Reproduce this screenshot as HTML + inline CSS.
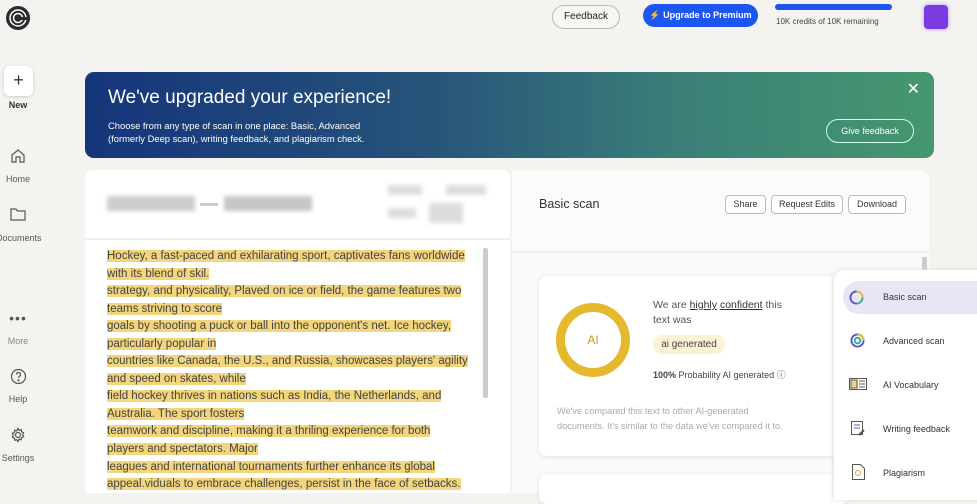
<!DOCTYPE html>
<html><head><style>
*{box-sizing:border-box;margin:0;padding:0}
body{width:977px;height:493px;overflow:hidden;background:#f4f3f0;font-family:"Liberation Sans",sans-serif;position:relative;color:#222}
.a{position:absolute}
.sl{position:absolute;width:36px;text-align:center;font-size:9px;color:#555}
.hl{background:#f2d57c;line-height:17.5px}
.btn{position:absolute;border:1px solid #bbb;border-radius:4px;font-size:9px;height:19px;line-height:17px;text-align:center;background:#fff;color:#333}
.mi{position:absolute;left:883px;font-size:9px;color:#333}
</style></head><body>
<svg class="a" style="left:5px;top:5px" width="26" height="26" viewBox="0 0 26 26"><circle cx="13" cy="13" r="12" fill="#2b2b2b"/><circle cx="13" cy="13" r="8" fill="none" stroke="#fff" stroke-width="1.5"/><circle cx="13" cy="13" r="4.5" fill="none" stroke="#fff" stroke-width="1.5"/><rect x="13" y="12" width="12" height="3" fill="#2b2b2b"/></svg>
<div class="a" style="left:552px;top:5px;width:68px;height:24px;border:1px solid #bbb;border-radius:12px;font-size:10px;text-align:center;line-height:22px;background:#f7f6f3">Feedback</div>
<div class="a" style="left:643px;top:4px;width:115px;height:23px;border-radius:12px;background:#1d56ee;color:#fff;font-size:9px;text-align:center;line-height:23px;font-weight:bold">⚡ Upgrade to Premium</div>
<div class="a" style="left:775px;top:4px;width:117px;height:6px;border-radius:3px;background:#1d56ee"></div>
<div class="a" style="left:776px;top:17px;font-size:8px;color:#444">10K credits of 10K remaining</div>
<div class="a" style="left:924px;top:5px;width:24px;height:24px;background:#7a3be0;border-radius:4px;box-shadow:0 0 4px #b39af0"></div>
<div class="a" style="left:4px;top:66px;width:29px;height:30px;background:#fff;border-radius:5px;box-shadow:0 1px 3px #ccc;text-align:center;font-size:18px;line-height:28px;color:#333">+</div>
<div class="sl" style="left:0;top:100px;font-weight:bold;color:#333">New</div>
<svg class="a" style="left:10px;top:148px" width="16" height="16" viewBox="0 0 16 16" fill="none" stroke="#555" stroke-width="1.2"><path d="M2 7L8 2l6 5v7H10V9H6v5H2z"/></svg>
<div class="sl" style="left:0;top:174px">Home</div>
<svg class="a" style="left:10px;top:207px" width="16" height="14" viewBox="0 0 16 14" fill="none" stroke="#555" stroke-width="1.2"><path d="M1 2h5l1.5 2H15v9H1z"/></svg>
<div class="sl" style="left:-4px;top:233px;width:44px">Documents</div>
<div class="sl" style="left:0;top:310px;font-size:14px;letter-spacing:1px;color:#555">•••</div>
<div class="sl" style="left:0;top:336px;color:#888">More</div>
<svg class="a" style="left:10px;top:368px" width="17" height="17" viewBox="0 0 17 17" fill="none" stroke="#555" stroke-width="1.2"><circle cx="8.5" cy="8.5" r="7"/><path d="M6.5 6.5a2 2 0 1 1 3 1.7c-.7.4-1 .8-1 1.6"/><circle cx="8.5" cy="12.3" r=".5" fill="#555"/></svg>
<div class="sl" style="left:0;top:394px">Help</div>
<svg class="a" style="left:10px;top:427px" width="16" height="16" viewBox="0 0 16 16" fill="none" stroke="#555" stroke-width="1.2"><circle cx="8" cy="8" r="2.5"/><path d="M8 1.5l1.2 1.8 2-.6.4 2.1 2 .9-.9 2 .9 2-2 .9-.4 2.1-2-.6L8 14.5l-1.2-1.8-2 .6-.4-2.1-2-.9.9-2-.9-2 2-.9.4-2.1 2 .6z"/></svg>
<div class="sl" style="left:0;top:453px">Settings</div>
<div class="a" style="left:85px;top:72px;width:849px;height:86px;border-radius:9px;background:linear-gradient(90deg,#15357a 0%,#26537a 40%,#3a7f78 70%,#46976f 100%)">
<div class="a" style="left:23px;top:15px;font-size:19px;color:#fff">We've upgraded your experience!</div>
<div class="a" style="left:23px;top:48px;font-size:9.4px;color:#fff;line-height:12.5px">Choose from any type of scan in one place: Basic, Advanced<br>(formerly Deep scan), writing feedback, and plagiarism check.</div>
<div class="a" style="right:20px;top:47px;width:88px;height:24px;border:1px solid #cfe;border-radius:12px;color:#fff;font-size:9px;text-align:center;line-height:22px">Give feedback</div>
<div class="a" style="right:14px;top:7px;color:#fff;font-size:16px">✕</div>
</div>
<div class="a" style="left:85px;top:170px;width:425px;height:323px;background:#fff;border-radius:8px 8px 0 0"></div>
<div class="a" style="left:85px;top:238px;width:425px;height:2px;background:#f0f0f0"></div>
<div class="a" style="left:107px;top:196px;width:88px;height:15px;background:#ccc;filter:blur(2px)"></div>
<div class="a" style="left:200px;top:203px;width:18px;height:3px;background:#ccc"></div>
<div class="a" style="left:224px;top:196px;width:88px;height:15px;background:#c6c6c6;filter:blur(2px)"></div>
<div class="a" style="left:388px;top:185px;width:34px;height:10px;background:#ddd;filter:blur(2px)"></div>
<div class="a" style="left:446px;top:185px;width:40px;height:10px;background:#ddd;filter:blur(2px)"></div>
<div class="a" style="left:388px;top:208px;width:28px;height:10px;background:#ddd;filter:blur(2px)"></div>
<div class="a" style="left:429px;top:203px;width:34px;height:20px;background:#ddd;filter:blur(2px)"></div>
<div class="a" style="left:483px;top:248px;width:5px;height:150px;background:#ccc;border-radius:2px"></div>
<div class="a" style="left:107px;top:248px;width:375px;font-size:11.5px;color:#444;line-height:17.55px;white-space:nowrap">
<span class="hl">Hockey, a fast-paced and exhilarating sport, captivates fans worldwide </span><br><span class="hl">with its blend of skil.</span><br><span class="hl">strategy, and physicality, Plaved on ice or field, the game features two </span><br><span class="hl">teams striving to score</span><br><span class="hl">goals by shooting a puck or ball into the opponent's net. Ice hockey, </span><br><span class="hl">particularly popular in</span><br><span class="hl">countries like Canada, the U.S., and Russia, showcases players' agility </span><br><span class="hl">and speed on skates, while</span><br><span class="hl">field hockey thrives in nations such as India, the Netherlands, and </span><br><span class="hl">Australia. The sport fosters</span><br><span class="hl">teamwork and discipline, making it a thriling experience for both </span><br><span class="hl">players and spectators. Major</span><br><span class="hl">leagues and international tournaments further enhance its global </span><br><span class="hl">appeal.viduals to embrace challenges, persist in the face of setbacks.</span>
</div>
<div class="a" style="left:512px;top:170px;width:417px;height:82px;background:#fcfbfa;border-radius:0 8px 0 0;border-bottom:1px solid #eee"></div>
<div class="a" style="left:512px;top:253px;width:417px;height:240px;background:#fafaf9"></div>
<div class="a" style="left:539px;top:197px;font-size:12.5px;color:#333">Basic scan</div>
<div class="btn" style="left:725px;top:195px;width:41px">Share</div>
<div class="btn" style="left:771px;top:195px;width:72px">Request Edits</div>
<div class="btn" style="left:848px;top:195px;width:58px">Download</div>
<div class="a" style="left:922px;top:257px;width:5px;height:14px;background:#ccc"></div>
<div class="a" style="left:539px;top:276px;width:310px;height:180px;background:#fff;border-radius:8px;box-shadow:0 1px 4px #e2e2e2"></div>
<div class="a" style="left:539px;top:474px;width:310px;height:30px;background:#fff;border-radius:8px;box-shadow:0 1px 4px #e2e2e2"></div>
<div class="a" style="left:556px;top:303px;width:74px;height:74px;border-radius:50%;border:9px solid #e5b92e;text-align:center;line-height:56px;font-size:12px;color:#c49a20">AI</div>
<div class="a" style="left:653px;top:298px;font-size:10.5px;color:#555;line-height:15px">We are <u style="color:#333">highly</u> <u style="color:#333">confident</u> this<br>text was</div>
<div class="a" style="left:653px;top:335px;width:72px;height:19px;border-radius:9px;background:#fcf2d5;font-size:10px;text-align:center;line-height:19px;color:#444">ai generated</div>
<div class="a" style="left:653px;top:368px;font-size:9px;color:#444"><b>100%</b> Probability AI generated ⓘ</div>
<div class="a" style="left:557px;top:404px;font-size:9.2px;color:#aaa;line-height:15px">We've compared this text to other AI-generated<br>documents. It's similar to the data we've compared it to.</div>
<div class="a" style="left:834px;top:270px;width:150px;height:230px;background:#fff;border-radius:10px 0 0 0;box-shadow:-1px 0 5px #ddd"></div>
<div class="a" style="left:843px;top:281px;width:140px;height:33px;background:#e8e6f5;border-radius:16px 0 0 16px"></div>
<svg class="a" style="left:849px;top:290px" width="15" height="15" viewBox="0 0 16 16" fill="none" stroke-width="2"><path d="M8 1.5a6.5 6.5 0 0 1 6.5 6.5" stroke="#e5b92e"/><path d="M14.5 8A6.5 6.5 0 0 1 8 14.5" stroke="#3a9"/><path d="M8 14.5A6.5 6.5 0 0 1 8 1.5" stroke="#55c"/></svg>
<div class="mi" style="top:292px">Basic scan</div>
<svg class="a" style="left:850px;top:333px" width="15" height="15" viewBox="0 0 16 16" fill="none" stroke-width="2"><circle cx="8" cy="8" r="6.5" stroke="#55c"/><path d="M8 1.5a6.5 6.5 0 0 1 6.5 6.5" stroke="#e5b92e"/><circle cx="8" cy="8" r="3" stroke="#3a9"/></svg>
<div class="mi" style="top:336px">Advanced scan</div>
<svg class="a" style="left:849px;top:378px" width="18" height="12" viewBox="0 0 18 12" fill="none" stroke="#555"><rect x=".5" y=".5" width="17" height="11"/><rect x="2" y="2" width="6" height="8" fill="#f2d57c"/><path d="M10 3h6M10 6h6M10 9h6"/></svg>
<div class="mi" style="top:380px">AI Vocabulary</div>
<svg class="a" style="left:851px;top:421px" width="15" height="16" viewBox="0 0 15 16" fill="none" stroke="#555"><rect x=".5" y=".5" width="11" height="13"/><path d="M3 4h6M3 7h6" stroke="#46c"/><path d="M8 14l5-5" stroke-width="2"/></svg>
<div class="mi" style="top:424px">Writing feedback</div>
<svg class="a" style="left:852px;top:464px" width="13" height="16" viewBox="0 0 13 16" fill="none" stroke="#555"><path d="M.5.5h8l4 4v11H.5z"/><circle cx="6" cy="9" r="2.5" stroke="#e5a02e"/></svg>
<div class="mi" style="top:468px">Plagiarism</div>
</body></html>
